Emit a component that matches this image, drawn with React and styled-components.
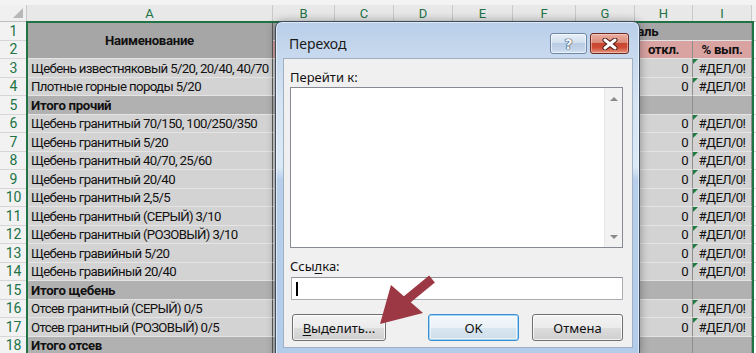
import React from 'react';
import styled, { createGlobalStyle, css } from 'styled-components';

const Global = createGlobalStyle`
  html, body { margin: 0; padding: 0; width: 756px; height: 353px; overflow: hidden; background: #fff; }
  #root { width: 756px; height: 353px; }
  * { box-sizing: border-box; }
`;

const Screen = styled.div`
  position: relative;
  width: 756px;
  height: 353px;
  overflow: hidden;
  background: #fff;
  font-family: Roboto, "Noto Sans", sans-serif;
`;

const TopStrip = styled.div`
  height: 5px;
  background: #f3f3f3;
`;

const Sheet = styled.div`
  display: grid;
  grid-template-columns: 27px 246px 62px 59px 59px 60px 63px 59px 58px 59px 1fr;
  grid-template-rows: 17px repeat(18, 18.5px);
`;

const ColHead = styled.div`
  background: ${p => (p.$sel ? '#e8e8e8' : '#f0f0f0')};
  border-right: 1px solid #cacaca;
  border-bottom: 1px solid #bdbdbd;
  color: ${p => (p.$sel ? '#217346' : '#444')};
  font-size: 13px;
  display: flex;
  align-items: center;
  justify-content: center;
  position: relative;
`;

const Corner = styled(ColHead)`
  &::after {
    content: '';
    position: absolute;
    right: 3px;
    bottom: 3px;
    border-left: 10px solid transparent;
    border-bottom: 10px solid #b8b8b8;
  }
`;

const RowHead = styled.div`
  background: #f2f2f2;
  border-bottom: 1px solid #d6d6d6;
  color: #217346;
  font-size: 14px;
  display: flex;
  align-items: center;
  justify-content: center;
`;

const fills = {
  head: '#a6a6a6',
  pink: '#d9a3a2',
  data: '#d3d3d3',
  total: '#b1b1b1',
  blank: '#ffffff',
};

const Cell = styled.div`
  grid-row: span ${p => p.$rs || 1};
  grid-column: span ${p => p.$cs || 1};
  background: ${p => fills[p.$fill || 'data']};
  border-right: 1px solid ${p => p.$vline || '#8e8e8e'};
  border-bottom: 1px solid ${p => (p.$fill === 'blank' ? '#d9d9d9' : '#e4e4e4')};
  display: flex;
  align-items: center;
  justify-content: ${p => p.$align || 'flex-start'};
  padding: 1px 4px 0 4px;
  font-size: 13.2px;
  letter-spacing: ${p => (p.$bold ? '-0.3px' : '-0.62px')};
  font-weight: ${p => (p.$bold ? 700 : 400)};
  color: #111;
  white-space: nowrap;
  overflow: hidden;
  position: relative;
  ${p => p.$err && css`
    &::before {
      content: '';
      position: absolute;
      left: 0;
      top: 0;
      border-top: 5px solid #1f7a3f;
      border-right: 5px solid transparent;
    }
  `}
`;

const Selection = styled.div`
  position: absolute;
  left: 26px;
  top: 21px;
  width: 728px;
  height: 340px;
  border: 2px solid #217346;
  pointer-events: none;
`;

/* ---------- dialog ---------- */

const Dialog = styled.div`
  position: absolute;
  left: 275px;
  top: 21px;
  width: 365px;
  height: 335px;
  border: 1px solid #3d4a5c;
  border-radius: 7px 7px 0 0;
  padding: 0 6px 7px 7px;
  display: flex;
  flex-direction: column;
  background: linear-gradient(180deg, #b8cee8 0px, #c6d8ed 30px, #d6e4f3 80px, #dce9f6 145px, #b7cfea 158px, #b3cce9 100%);
  box-shadow: inset 0 0 0 1px rgba(255, 255, 255, 0.55), 0 0 10px rgba(0, 0, 0, 0.35);
  font-family: "Noto Sans", "Open Sans", sans-serif;
  color: #000;
`;

const TitleBar = styled.div`
  height: 36px;
  display: flex;
  align-items: flex-start;
  padding: 0 4px 0 6px;
`;

const TitleText = styled.div`
  margin-top: 13px;
  font-size: 14px;
  line-height: 17px;
  color: #1a1a1a;
  flex: 1;
`;

const CaptionButtons = styled.div`
  margin-top: 11px;
  display: flex;
  gap: 3px;
`;

const CapBtn = styled.div`
  height: 21px;
  width: ${p => p.$w}px;
  border-radius: 3px;
  display: flex;
  align-items: center;
  justify-content: center;
  ${p => (p.$close
    ? css`
      border: 1px solid #6b2a22;
      background: linear-gradient(180deg, #eab0a2 0%, #db8a78 45%, #c8452f 50%, #cf4b36 72%, #e59a82 100%);
      box-shadow: inset 0 0 0 1px rgba(255, 220, 210, 0.5);
    `
    : css`
      border: 1px solid #6f87a6;
      background: linear-gradient(180deg, #e7eff8 0%, #d3e0ef 45%, #b9cce3 50%, #c3d4e9 80%, #d5e3f2 100%);
      box-shadow: inset 0 0 0 1px rgba(255, 255, 255, 0.6);
    `)}
`;

const HelpMark = styled.span`
  font-family: "DejaVu Sans", sans-serif;
  font-weight: 700;
  font-size: 14px;
  line-height: 1;
  color: #f4f7fb;
  text-shadow: 0 0 1px #2c3d55, 0 0 1px #2c3d55, 0 0 1px #2c3d55;
`;

const Inner = styled.div`
  flex: 1;
  background: #f0f0f0;
  border: 1px solid #9fb0c5;
  padding: 0 9px 0 6px;
  display: flex;
  flex-direction: column;
  font-size: 13px;
`;

const Label = styled.div`
  line-height: 16px;
  margin-top: ${p => p.$mt}px;
  color: #111;
  u { text-decoration: underline; text-underline-offset: 2px; }
`;

const ListBox = styled.div`
  margin-top: 2px;
  height: 161px;
  background: #fff;
  border: 1px solid #868b93;
  display: flex;
  justify-content: flex-end;
`;

const ScrollBar = styled.div`
  width: 18px;
  background: #f2f2f2;
  border-left: 1px solid #e6e6e6;
  display: flex;
  flex-direction: column;
  justify-content: space-between;
`;

const ScrollArrow = styled.div`
  height: 21px;
  display: flex;
  align-items: center;
  justify-content: center;
  &::after {
    content: '';
    border-left: 4px solid transparent;
    border-right: 4px solid transparent;
    ${p => (p.$up ? 'border-bottom: 4px solid #8a8a8a;' : 'border-top: 4px solid #8a8a8a;')}
  }
`;

const TextInput = styled.div`
  margin-top: 3px;
  margin-left: 1px;
  height: 23px;
  background: #fff;
  border: 1px solid #abadb3;
  border-top-color: #8e9199;
  display: flex;
  align-items: center;
  padding-left: 4px;
`;

const Caret = styled.div`
  width: 2px;
  height: 14px;
  background: #000;
`;

const ButtonRow = styled.div`
  margin-top: 14px;
  display: flex;
  align-items: center;
  padding-left: 2px;
`;

const Spacer = styled.div`
  flex: 1;
`;

const Btn = styled.div`
  height: 27px;
  width: ${p => p.$w}px;
  margin-left: ${p => p.$ml || 0}px;
  border-radius: 3px;
  display: flex;
  align-items: center;
  justify-content: center;
  font-size: 13px;
  color: #111;
  u { text-decoration: underline; text-underline-offset: 2px; }
  ${p => (p.$default
    ? css`
      border: 1px solid #3c8fd0;
      background: linear-gradient(180deg, #f4f8fb 0%, #e9f1f7 50%, #d9e6f0 51%, #cddde9 100%);
      box-shadow: inset 0 0 0 1px #9fd3f4, inset 0 0 0 2px rgba(255, 255, 255, 0.6);
    `
    : css`
      border: 1px solid #707070;
      background: linear-gradient(180deg, #f3f3f3 0%, #ebebeb 50%, #dddddd 51%, #cfcfcf 100%);
      box-shadow: inset 0 0 0 1px rgba(255, 255, 255, 0.75);
    `)}
`;

const Overlay = styled.svg`
  position: absolute;
  left: 0;
  top: 0;
  pointer-events: none;
`;

/* ---------- data ---------- */

const cols = ['A', 'B', 'C', 'D', 'E', 'F', 'G', 'H', 'I'];

const rows = [
  ['Щебень известняковый 5/20, 20/40, 40/70', 'data'],
  ['Плотные горные породы 5/20', 'data'],
  ['Итого прочий', 'total'],
  ['Щебень гранитный 70/150, 100/250/350', 'data'],
  ['Щебень гранитный 5/20', 'data'],
  ['Щебень гранитный 40/70, 25/60', 'data'],
  ['Щебень гранитный 20/40', 'data'],
  ['Щебень гранитный 2,5/5', 'data'],
  ['Щебень гранитный (СЕРЫЙ) 3/10', 'data'],
  ['Щебень гранитный (РОЗОВЫЙ) 3/10', 'data'],
  ['Щебень гравийный 5/20', 'data'],
  ['Щебень гравийный 20/40', 'data'],
  ['Итого щебень', 'total'],
  ['Отсев гранитный (СЕРЫЙ) 0/5', 'data'],
  ['Отсев гранитный (РОЗОВЫЙ) 0/5', 'data'],
  ['Итого отсев', 'total'],
];

function CloseGlyph() {
  return (
    <svg width="16" height="12" viewBox="0 0 16 12">
      <path d="M3 2 L13 10 M13 2 L3 10" stroke="#4a1a14" strokeWidth="5" strokeLinecap="round" />
      <path d="M3 2 L13 10 M13 2 L3 10" stroke="#ffffff" strokeWidth="3" strokeLinecap="round" />
    </svg>
  );
}

export default function App() {
  return (
    <Screen>
      <Global />
      <TopStrip />
      <Sheet>
        <Corner />
        {cols.map(c => (
          <ColHead key={c} $sel>{c}</ColHead>
        ))}
        <ColHead />

        <RowHead>1</RowHead>
        <Cell $rs={2} $fill="head" $bold $align="center" $vline="#5c5c5c">Наименование</Cell>
        <Cell $fill="head" />
        <Cell $fill="head" />
        <Cell $fill="head" />
        <Cell $fill="head" />
        <Cell $cs={4} $fill="head" $bold $align="center">Февраль</Cell>
        <Cell $fill="blank" $vline="#d9d9d9" />

        <RowHead>2</RowHead>
        {[0, 1, 2, 3, 4, 5].map(i => (
          <Cell key={i} $fill="pink" />
        ))}
        <Cell $fill="pink" $bold $align="center">откл.</Cell>
        <Cell $fill="pink" $bold $align="center">% вып.</Cell>
        <Cell $fill="blank" $vline="#d9d9d9" />

        {rows.map(([name, kind], i) => {
          const total = kind === 'total';
          return (
            <React.Fragment key={i}>
              <RowHead>{i + 3}</RowHead>
              <Cell $fill={kind} $bold={total} $vline="#5c5c5c">{name}</Cell>
              {[0, 1, 2, 3, 4, 5].map(k => (
                <Cell key={k} $fill={kind} />
              ))}
              <Cell $fill={kind} $align="flex-end">{total ? '' : '0'}</Cell>
              <Cell $fill={kind} $err={!total} $align="center">{total ? '' : '#ДЕЛ/0!'}</Cell>
              <Cell $fill="blank" $vline="#d9d9d9" />
            </React.Fragment>
          );
        })}
      </Sheet>

      <Selection />

      <Dialog>
        <TitleBar>
          <TitleText>Переход</TitleText>
          <CaptionButtons>
            <CapBtn $w={37}><HelpMark>?</HelpMark></CapBtn>
            <CapBtn $w={39} $close><CloseGlyph /></CapBtn>
          </CaptionButtons>
        </TitleBar>
        <Inner>
          <Label $mt={10}>Перейти к:</Label>
          <ListBox>
            <ScrollBar>
              <ScrollArrow $up />
              <ScrollArrow />
            </ScrollBar>
          </ListBox>
          <Label $mt={10}>Ссы<u>л</u>ка:</Label>
          <TextInput>
            <Caret />
          </TextInput>
          <ButtonRow>
            <Btn $w={94}><u>В</u>ыделить...</Btn>
            <Spacer />
            <Btn $w={91} $default>OK</Btn>
            <Btn $w={91} $ml={13}>Отмена</Btn>
          </ButtonRow>
        </Inner>
      </Dialog>

      <Overlay width="756" height="353" viewBox="0 0 756 353">
        <line x1="432" y1="279" x2="404" y2="302" stroke="#9c3843" strokeWidth="9" />
        <polygon points="380,324 391,285 423,313" fill="#9c3843" />
      </Overlay>
    </Screen>
  );
}
